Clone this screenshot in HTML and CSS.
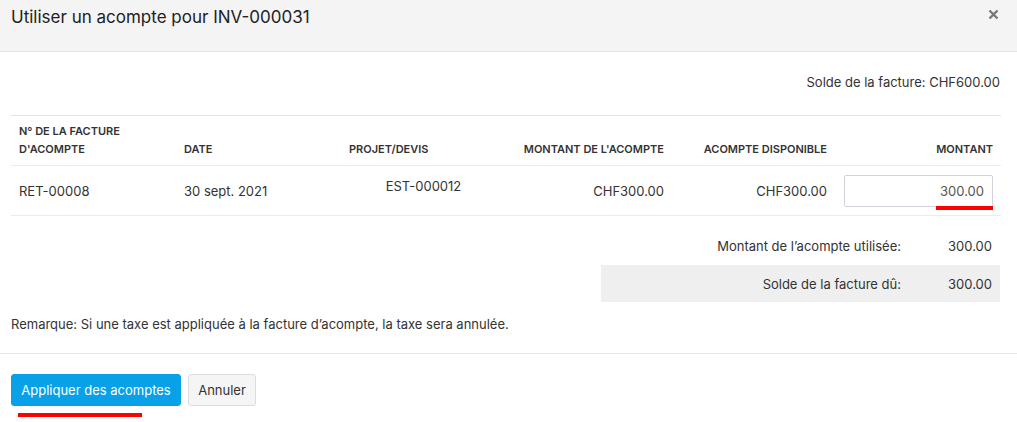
FILE: index.html
```html
<!DOCTYPE html>
<html lang="fr">
<head>
<meta charset="utf-8">
<link rel="stylesheet" href="styles.css">
</head>
<body>
<div class="modal">
  <div class="modal-header">
    <h4 class="modal-title">Utiliser un acompte pour INV-000031</h4>
    <button class="close" aria-label="Fermer">
      <svg width="11" height="11" viewBox="0 0 11 11"><path d="M1.5 1.5 L9.5 9.5 M9.5 1.5 L1.5 9.5" stroke="#777" stroke-width="2.4" stroke-linecap="butt"/></svg>
    </button>
  </div>
  <div class="modal-body">
    <div class="balance">Solde de la facture: CHF600.00</div>
    <table class="credits">
      <thead>
        <tr>
          <th>N° DE LA FACTURE<br>D'ACOMPTE</th>
          <th>DATE</th>
          <th>PROJET/DEVIS</th>
          <th class="r">MONTANT DE L'ACOMPTE</th>
          <th class="r r5">ACOMPTE DISPONIBLE</th>
          <th class="r r6">MONTANT</th>
        </tr>
      </thead>
      <tbody>
        <tr>
          <td>RET-00008</td>
          <td>30 sept. 2021</td>
          <td class="proj">EST-000012</td>
          <td class="r">CHF300.00</td>
          <td class="r r5">CHF300.00</td>
          <td class="inp-cell"><div class="inp">300.00</div><span class="mark mark-inp"></span></td>
        </tr>
      </tbody>
    </table>
    <div class="summary">
      <div class="sum-row"><span class="lbl">Montant de l’acompte utilisée:</span><span class="val">300.00</span></div>
      <div class="sum-row grey"><span class="lbl">Solde de la facture dû:</span><span class="val">300.00</span></div>
    </div>
    <p class="note">Remarque: Si une taxe est appliquée à la facture d’acompte, la taxe sera annulée.</p>
  </div>
  <div class="modal-footer">
    <div class="btn-wrap"><button class="btn btn-primary">Appliquer des acomptes</button><span class="mark mark-btn"></span></div>
    <button class="btn btn-default">Annuler</button>
  </div>
</div>
</body>
</html>
```

FILE: styles.css
```css
* { box-sizing: border-box; }
html, body { margin: 0; padding: 0; background: #fff; }
body {
  font-family: Inter, "Noto Sans", sans-serif;
  font-size: 13px;
  color: #333;
  width: 1017px;
  height: 422px;
  overflow: hidden;
}
.modal { width: 1017px; }
.modal-header {
  height: 52px;
  background: #f4f4f4;
  border-bottom: 1px solid #e6e6e6;
  display: flex;
  justify-content: space-between;
  align-items: flex-start;
  padding: 6px 18px 0 11px;
}
.modal-title {
  margin: 0;
  font-size: 17px;
  font-weight: 400;
  color: #222;
  line-height: 22px;
}
.close {
  border: 0;
  background: none;
  padding: 0;
  margin-top: 3px;
  width: 11px;
  height: 11px;
  display: block;
}
.close svg { display: block; }
.modal-body { padding: 0 17px 0 11px; }
.balance {
  text-align: right;
  padding-top: 22px;
  height: 63px;
  line-height: 16px;
}
.credits {
  width: 989px;
  border-collapse: collapse;
  table-layout: fixed;
  border-top: 1px solid #e3e3e3;
}
.credits th, .credits td {
  width: 165px;
  padding: 0 8px;
  text-align: left;
  border-bottom: 1px solid #ebebeb;
}
.credits th {
  font-size: 11px;
  font-weight: 600;
  color: #333;
  line-height: 18px;
  height: 50px;
  vertical-align: bottom;
  padding-bottom: 7px;
  white-space: nowrap;
}
.credits td { height: 50px; vertical-align: middle; }
.credits .r { text-align: right; }
.credits td.r, .credits th.r { padding-right: 7px; }
.credits .r5 { padding-right: 9px !important; }
.credits .r6 { padding-right: 8px !important; }
.credits td.proj { text-align: center; vertical-align: top; padding-top: 12px; }
.credits td.inp-cell { position: relative; padding: 0 8px 0 8px; }
.inp {
  height: 32px;
  border: 1px solid #d0d4da;
  border-radius: 2px;
  text-align: right;
  padding: 0 8px;
  line-height: 30px;
  color: #555;
}
.mark { position: absolute; background: #f00; height: 4px; }
.mark-inp { right: 8px; width: 57px; top: 40px; }
.summary { margin-top: 11px; }
.sum-row {
  display: flex;
  justify-content: flex-end;
  width: 399px;
  margin-left: 590px;
  height: 37px;
  align-items: center;
}
.sum-row + .sum-row { margin-top: 1px; }
.sum-row.grey { background: #efefef; }
.lbl { text-align: right; }
.val { width: 99px; text-align: right; padding-right: 8px; }
.note { margin: 0; padding-top: 14px; height: 51px; line-height: 16px; }
.modal-footer {
  border-top: 1px solid #e6e6e6;
  padding: 20px 11px 0;
  display: flex;
  gap: 7px;
  align-items: flex-start;
}
.btn-wrap { position: relative; }
.btn {
  font-family: Inter, "Noto Sans", sans-serif;
  font-size: 13px;
  height: 32px;
  border-radius: 3px;
  padding: 0;
  cursor: pointer;
  display: block;
  white-space: nowrap;
  text-align: center;
}
.btn-primary {
  background: #08a1e8;
  color: #fff;
  border: 1px solid #08a1e8;
  width: 170px;
}
.btn-default {
  background: #f5f5f5;
  color: #333;
  border: 1px solid #ddd;
  width: 68px;
}
.mark-btn { left: 7px; width: 124px; top: 39px; }
```
